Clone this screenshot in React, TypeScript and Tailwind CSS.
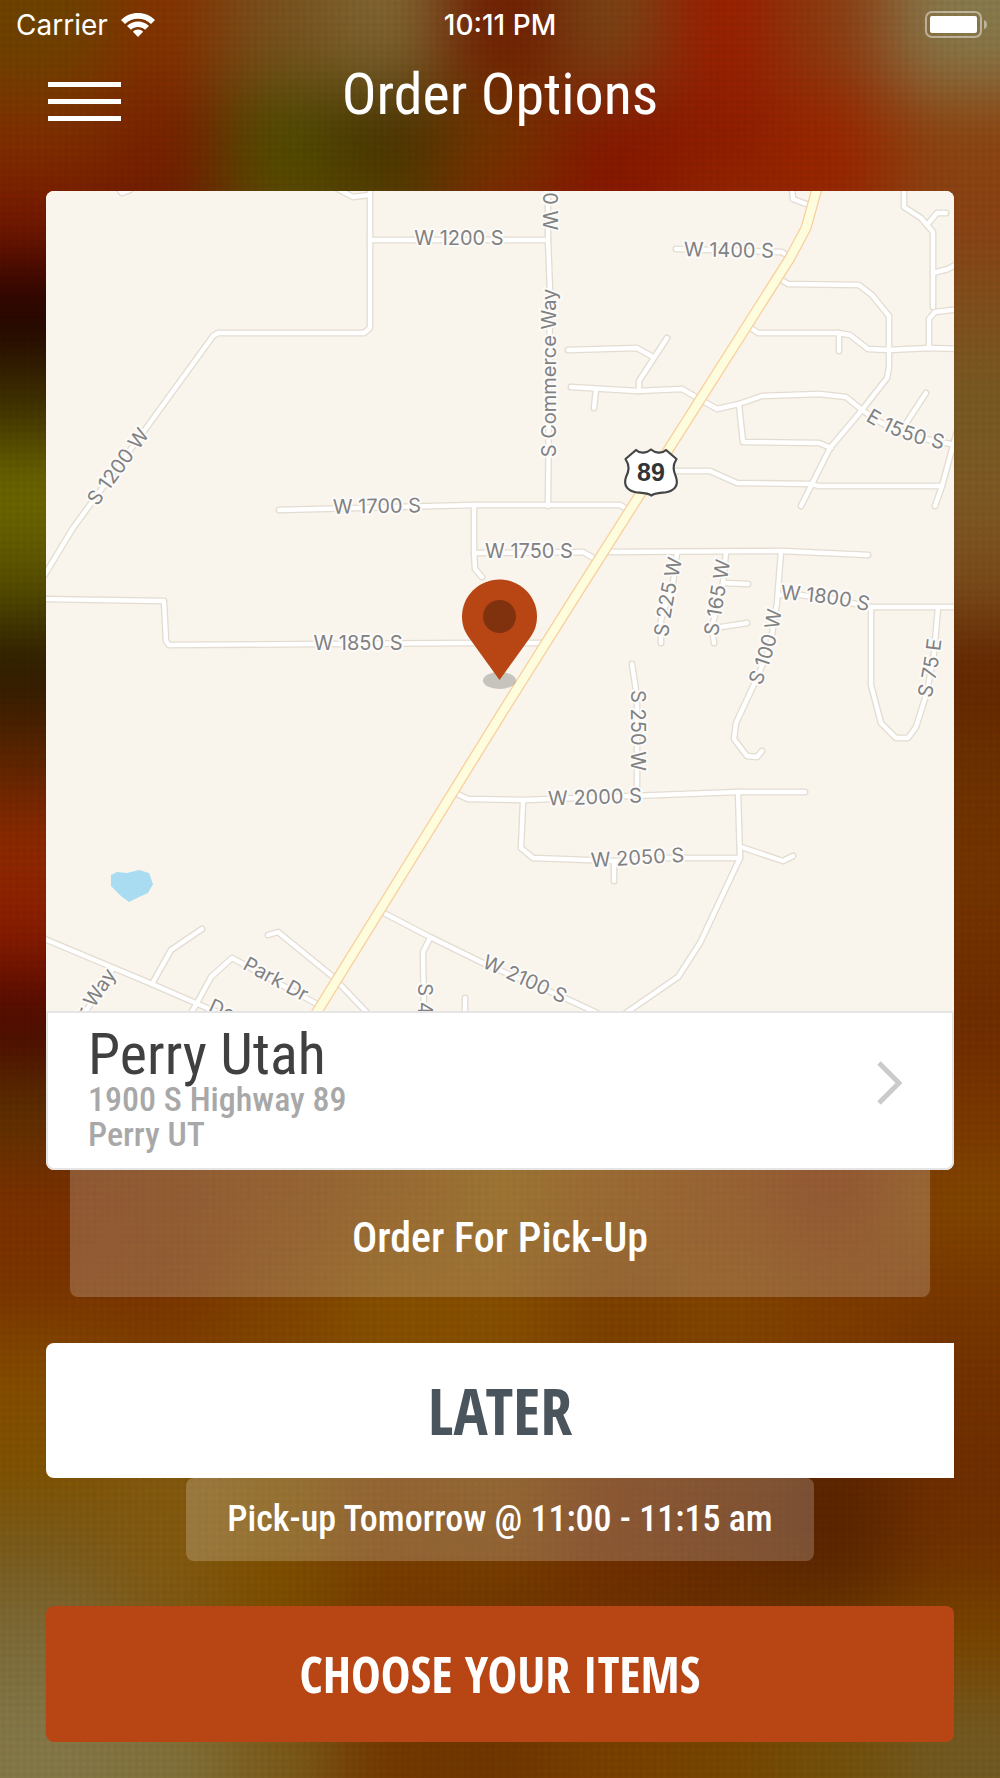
import { useState } from 'react';

interface RoadLabel {
  text: string;
  d: string;
}

// Colour rows of the blurred backdrop, top to bottom
const BACKDROP_ROWS: string[][] = [
  ['#6e4200', '#853200', '#78521e', '#806632', '#701e00', '#7a4416', '#9a1e00', '#8c3c10', '#887a4c'],
  ['#803000', '#782000', '#4e4c00', '#463200', '#733600', '#861800', '#8e1c00', '#9a2600', '#8c4410'],
  ['#781800', '#6e1c00', '#5e4a00', '#5a4200', '#802600', '#861600', '#942600', '#962600', '#8a4214'],
  ['#200000', '#80501c'],
  ['#3c2e00', '#785a22'],
  ['#706a00', '#7e5a24'],
  ['#5a5200', '#7c4e1c'],
  ['#2a1a00', '#642600'],
  ['#5a2400', '#6c3000'],
  ['#902a00', '#723400'],
  ['#8a1c00', '#743200'],
  ['#4a0800', '#6f2c00'],
  ['#5c3000', '#783400', '#7c3c00', '#804600', '#855200', '#824600', '#803c00', '#7a3000', '#7a3600'],
  ['#7c3000', '#783400', '#7c3c00', '#804600', '#855200', '#824600', '#803c00', '#7a3000', '#824600'],
  ['#7a3400', '#7a3400', '#804200', '#865000', '#864e00', '#7c4000', '#824400', '#7e3c00', '#7a3800'],
  ['#854c00', '#804200', '#824800', '#865000', '#864e00', '#7c4000', '#824400', '#7e3c00', '#733200'],
  ['#805200', '#845a10', '#7e5000', '#7a3e00', '#7a4200', '#702e00', '#662a00', '#5a2400', '#702e00'],
  ['#7a5c1e', '#845a10', '#7e5000', '#7a3e00', '#783e00', '#6f2e00', '#662a00', '#5a2400', '#703200'],
  ['#7e6c3a', '#7c5818', '#7c4c00', '#743800', '#703400', '#703400', '#6c3200', '#703c00', '#7a4600'],
  ['#857848', '#82723c', '#7c5c1c', '#733800', '#703600', '#7a4000', '#774600', '#74500a', '#735a22'],
];

const ROADS: string[] = [
  'M118 188 L122 193 L130 190',
  'M336 188 L353 197 L369 195',
  'M370 180 V328 L364 333 H218 L213 336 L147 427 L73 528 L44 576',
  'M370 240 H548',
  'M548 180 V240 L550 290 L548 506',
  'M279 510 L474 505 H620 L629 510',
  'M474 505 V551 L475 569 L482 577',
  'M474 553 L583 552 L597 560',
  'M40 599 L164 601 L166 641 L169 645 L470 643 H545',
  'M792 188 L793 199 L809 205',
  'M904 188 V207 L921 218 L933 232 V307',
  'M927 225 L937 213 H946',
  'M933 273 L948 269 L960 262',
  'M960 309 L935 312 L929 319 V348',
  'M676 249 L782 252 L788 256',
  'M780 279 L788 284 L859 285 L872 295 L889 316 V367 L887 378 L862 410 L830 448 L812 484 L801 506',
  'M748 326 L758 333 H838 L850 335 L868 349 L889 350 L929 348 L960 349',
  'M839 333 V351',
  'M568 350 L637 348 L653 357',
  'M667 338 L639 381 V391',
  'M571 387 L637 391 L682 389 L717 409 L739 404 L762 396 L819 394 L846 397 L862 410 L878 421 L900 433 L925 439 L951 444',
  'M596 389 L594 408',
  'M739 405 L743 442 L819 443 L831 448',
  'M926 393 L905 425',
  'M660 471 H710 L737 483 L812 484 L818 486 H942',
  'M960 420 L942 486 L935 506',
  'M605 552 L782 551 L868 555',
  'M677 552 L673 583 L661 620 V643',
  'M726 552 L723 583 L712 627 L714 643',
  'M723 583 L748 584',
  'M715 628 L747 623',
  'M781 552 L777 603 L770 647 L757 678 L736 723 L734 739 L747 756 L757 757 L762 751',
  'M778 595 L800 595 L833 599 L870 607 H960',
  'M871 607 V685 L881 723 L896 738 H908 L916 727 L927 692 L934 653 L938 608',
  'M632 664 L637 697 V795',
  'M455 793 L468 799 L525 800 L738 792 H805',
  'M523 802 L521 848 L533 858 L615 861 L660 858 H740',
  'M738 792 L740 858 L700 943 L678 977 L620 1017',
  'M741 847 L783 861 L793 856',
  'M614 863 V881',
  'M380 911 L430 937 L483 963 L567 999 L610 1019',
  'M430 938 L423 952 L424 1020',
  'M465 998 V1020',
  'M268 935 L278 932 L332 976 L374 1020',
  'M40 937 L152 984 L207 1008 L240 1020',
  'M202 929 L171 950 L152 984',
  'M188 1018 L197 1003 L211 977 L232 958 L317 1004',
  'M78 1024 L112 970',
];

const HIGHWAY = 'M820 178 L806 228 L790 258 L665 455 L573 600 L500 716 L312 1020';

const ROAD_LABELS: RoadLabel[] = [
  { text: 'W 1200 S', d: 'M400 238 H518' },
  { text: 'W 1400 S', d: 'M669 249 L789 251' },
  { text: '00 W', d: 'M550 170 V240' },
  { text: 'S Commerce Way', d: 'M549 483 V263' },
  { text: 'S 1200 W', d: 'M79 520 L157 413' },
  { text: 'E 1550 S', d: 'M854 404 Q898 438 962 445' },
  { text: 'W 1700 S', d: 'M315 507 L439 505' },
  { text: 'W 1750 S', d: 'M469 551 H589' },
  { text: 'W 1850 S', d: 'M298 643 H418' },
  { text: 'S 225 W', d: 'M660 648 Q662 615 678 546' },
  { text: 'S 165 W', d: 'M709 646 L725 549' },
  { text: 'S 100 W', d: 'M744 704 Q772 655 777 586' },
  { text: 'W 1800 S', d: 'M770 592 Q830 594 880 607' },
  { text: 'S 75 E', d: 'M921 710 Q931 675 936 625' },
  { text: 'S 250 W', d: 'M638 660 V801' },
  { text: 'W 2000 S', d: 'M535 799 L655 795' },
  { text: 'W 2050 S', d: 'M577 861 L698 854' },
  { text: 'W 2100 S', d: 'M467 953 L583 1005' },
  { text: 'Park Dr', d: 'M233 956 L319 1002' },
  { text: 'De', d: 'M202 1001 L242 1019' },
  { text: 'r Way', d: 'M73 1027 L119 959' },
  { text: 'S 4', d: 'M425 972 V1026' },
];

function Backdrop() {
  const rowHeight = 1778 / BACKDROP_ROWS.length;

  return (
    <svg
      className="absolute inset-0 -z-10 h-full w-full"
      viewBox="0 0 1000 1778"
      preserveAspectRatio="none"
      aria-hidden="true"
    >
      <defs>
        <filter
          id="soften"
          filterUnits="userSpaceOnUse"
          x="-200"
          y="-200"
          width="1400"
          height="2178"
          colorInterpolationFilters="sRGB"
        >
          <feGaussianBlur stdDeviation="36" />
        </filter>
        <pattern id="weave" width="7" height="7" patternUnits="userSpaceOnUse">
          <path d="M3.500 0 L7 3.500 L3.500 7 L0 3.500 Z" fill="#000" opacity="0.04" />
        </pattern>
      </defs>
      <rect width="1000" height="1778" fill="#6f3200" />
      <g filter="url(#soften)">
        {BACKDROP_ROWS.map((row, r) => {
          const cellWidth = 1000 / row.length;
          const top = r === 0 ? -200 : r * rowHeight;
          const bottom = r === BACKDROP_ROWS.length - 1 ? 1978 : (r + 1) * rowHeight + 1;
          return row.map((color, c) => {
            const left = c === 0 ? -200 : c * cellWidth;
            const right = c === row.length - 1 ? 1200 : (c + 1) * cellWidth + 1;
            return (
              <rect key={`${r}-${c}`} x={left} y={top} width={right - left} height={bottom - top} fill={color} />
            );
          });
        })}
      </g>
      <rect width="1000" height="1778" fill="url(#weave)" />
    </svg>
  );
}

function StatusBar() {
  return (
    <div className="grid h-[50px] grid-cols-3 items-center px-4 font-['Inter',sans-serif] text-[28px] leading-none text-white">
      <div className="flex items-center gap-3">
        <span>Carrier</span>
        <svg width="36" height="26" viewBox="0 0 36 26" fill="#fff" aria-label="Wi-Fi">
          <path d="M18 1 C24.5 1 30.5 3.6 35 8 L31 12 C27.500 8.700 23 6.800 18 6.800 C13 6.800 8.500 8.700 5 12 L1 8 C5.500 3.600 11.500 1 18 1 Z" />
          <path d="M18 9.500 C22.200 9.500 26 11.100 29 13.900 L25 17.800 C23.100 16.100 20.700 15.100 18 15.100 C15.300 15.100 12.900 16.100 11 17.800 L7 13.900 C10 11.100 13.800 9.500 18 9.500 Z" />
          <path d="M18 17.600 C20 17.600 21.800 18.400 23.100 19.700 L18 25 L12.900 19.700 C14.200 18.400 16 17.600 18 17.600 Z" />
        </svg>
      </div>
      <span className="text-center font-medium">10:11 PM</span>
      <svg className="-mr-1 justify-self-end" width="63" height="28" viewBox="0 0 63 28" aria-label="Battery full">
        <rect x="1" y="1" width="55" height="25" rx="6" fill="none" stroke="#fff" strokeOpacity="0.45" strokeWidth="2" />
        <rect x="5" y="5" width="47" height="17" rx="2" fill="#fff" />
        <path d="M59 9 Q62 10 62 13.500 Q62 17 59 18 Z" fill="#fff" fillOpacity="0.45" />
      </svg>
    </div>
  );
}

function LocationMap() {
  return (
    <svg className="block h-auto w-full" viewBox="46 191 908 820" role="img" aria-label="Map of Perry Utah">
      <rect x="46" y="191" width="908" height="820" fill="#f9f5ed" />

      {/* Roads: casing first, then the fill */}
      <g fill="none" strokeLinecap="round" strokeLinejoin="round">
        {ROADS.map((d) => (
          <path key={d} d={d} stroke="#e3dcd1" strokeWidth="7" />
        ))}
        {ROADS.map((d) => (
          <path key={d} d={d} stroke="#fff" strokeWidth="4.400" />
        ))}
        <path d={HIGHWAY} stroke="#f8cf9c" strokeWidth="11" />
        <path d={HIGHWAY} stroke="#fdfcdc" strokeWidth="8.500" />
      </g>

      <path
        d="M111 875 L117 872 L127 873 L139 870 L149 873 L153 884 L148 893 L139 897 L129 902 L121 896 L111 886 Z"
        fill="#a9dcf0"
      />

      {/* Street names */}
      <g
        className="font-['Inter',sans-serif] text-[20px]"
        fill="#808183"
        stroke="#fdfbf8"
        strokeWidth="4"
        strokeLinejoin="round"
        paintOrder="stroke"
        textAnchor="middle"
      >
        {ROAD_LABELS.map((label, i) => (
          <g key={label.d}>
            <path id={`street-${i}`} d={label.d} fill="none" stroke="none" />
            <text dy="7">
              <textPath href={`#street-${i}`} startOffset="50%">
                {label.text}
              </textPath>
            </text>
          </g>
        ))}
      </g>

      {/* US route shield */}
      <path
        d="M636 450 C640 454 647 453 651 449.500 C655 453 662 454 666 450 L676.500 459 C672 466 673.500 471 676 477 C679 486 674 491 665 492.500 C659 493 654 493 651.500 495.500 C648 493 643 493 637 492.500 C628 491 623 486 626 477 C629 471 630 466 625.500 459 Z"
        fill="#fff"
        stroke="#444547"
        strokeWidth="2.200"
        strokeLinejoin="round"
      />
      <text
        className="font-['Liberation_Sans',sans-serif] text-[25px] font-bold"
        x="651"
        y="481"
        fill="#333436"
        textAnchor="middle"
      >
        89
      </text>

      {/* Store pin */}
      <ellipse cx="499.500" cy="680.500" rx="16.500" ry="8.500" fill="#000" fillOpacity="0.2" />
      <path
        d="M499.500 680 L468.500 637 C464 630.500 462 624 462 616.500 C462 596 479 579.500 499.500 579.500 C520 579.500 537 596 537 616.500 C537 624 535 630.500 530.500 637 Z"
        fill="#b84614"
      />
      <circle cx="499.500" cy="616.500" r="16.500" fill="#80310e" />
    </svg>
  );
}

export default function App() {
  const [menuOpen, setMenuOpen] = useState(false);

  return (
    <div className="relative isolate min-h-screen overflow-hidden font-['Roboto_Condensed','Lato',sans-serif]">
      <Backdrop />
      <StatusBar />

      <header className="grid h-[141px] grid-cols-[1fr_auto_1fr] items-start px-12">
        <button
          type="button"
          className="mt-8 w-[73px]"
          aria-label="Menu"
          aria-expanded={menuOpen}
          onClick={() => setMenuOpen(!menuOpen)}
        >
          <svg width="73" height="39" viewBox="0 0 73 39" fill="#fff">
            <path d="M0 0 H73 V5 H0 Z M0 17 H73 V22 H0 Z M0 34 H73 V39 H0 Z" />
          </svg>
        </button>
        <h1 className="text-[58px] leading-[88px] text-white">Order Options</h1>
      </header>

      <main className="flex flex-col px-[46px] pb-9">
        <section className="overflow-hidden rounded-lg bg-white">
          <LocationMap />
          <a
            href="#perry"
            className="flex h-[159px] items-center justify-between rounded-b-lg border-2 border-[#e5e5e6] pr-[50px] pb-4 pl-10"
          >
            <div className="pt-3">
              <h2 className="text-[58px] leading-[56px] text-[#404041]">Perry Utah</h2>
              <p className="text-[34px] leading-[35px] font-medium text-[#a8a8a8]">
                1900 S Highway 89
                <br />
                Perry UT
              </p>
            </div>
            <svg width="25" height="44" viewBox="0 0 25 44" fill="none" aria-hidden="true">
              <path d="M2 2 L22 22 L2 42" stroke="#cbcbcc" strokeWidth="5" />
            </svg>
          </a>
        </section>

        <button
          type="button"
          className="mx-6 h-[127px] rounded-b-lg bg-white/20 pt-2 text-[42px] font-medium text-white"
        >
          Order For Pick-Up
        </button>

        <button
          type="button"
          className="mt-[46px] h-[135px] rounded-l-lg bg-white font-['Open_Sans_Condensed','Lato',sans-serif] text-[64px] font-bold text-[#4a545c]"
        >
          LATER
        </button>
        <p className="mx-[140px] h-[83px] rounded-lg bg-white/20 text-center text-[36px] leading-[83px] font-medium text-white">
          Pick-up Tomorrow @ 11:00 - 11:15 am
        </p>

        <button
          type="button"
          className="mt-[45px] h-[136px] rounded-lg bg-[#b84614] font-['Open_Sans_Condensed','Lato',sans-serif] text-[50px] font-bold text-white"
        >
          CHOOSE YOUR ITEMS
        </button>
      </main>
    </div>
  );
}
